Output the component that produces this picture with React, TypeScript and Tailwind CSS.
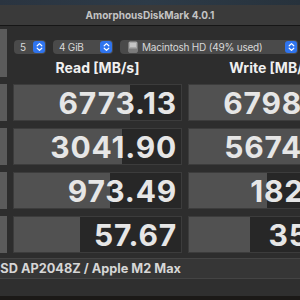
const rows = [
  { read: "6773.13", readVal: 6773.13, write: "6798.36", writeVal: 6798.36 },
  { read: "3041.90", readVal: 3041.9, write: "5674.05", writeVal: 5674.05 },
  { read: "973.49", readVal: 973.49, write: "182.72", writeVal: 182.72 },
  { read: "57.67", readVal: 57.67, write: "35.61", writeVal: 35.61 },
];

// log scale bar, ~24px per decade
const barWidth = (v: number) => Math.max(0, 24 * Math.log10(v) + 24);

function Stepper() {
  return (
    <div className="flex h-[12px] w-[12px] shrink-0 items-center justify-center rounded-[3px] bg-[#2f74ee]">
      <svg width="7" height="10" viewBox="0 0 7 10" fill="none" stroke="white" strokeWidth={1.2} strokeLinecap="round" strokeLinejoin="round">
        <path d="M1.2 3.8 L3.5 1.6 L5.8 3.8" />
        <path d="M1.2 6.2 L3.5 8.4 L5.8 6.2" />
      </svg>
    </div>
  );
}

function Select({ width, children }: { width: string; children: React.ReactNode }) {
  return (
    <div className={`flex h-[14px] shrink-0 items-center justify-between rounded-[4px] bg-[#4a4a4a] pl-[6px] pr-[1px] text-[10px] leading-none tracking-[-0.2px] whitespace-nowrap text-[#d8d8d8] ${width}`}>
      <div className="flex items-center gap-[4px]">{children}</div>
      <Stepper />
    </div>
  );
}

function Cell({ text, value, width }: { text: string; value: number; width: string }) {
  return (
    <div className={`relative h-[37px] shrink-0 border border-[#3c3c3c] bg-[#272727] ${width}`}>
      <div className="absolute left-0 top-0 h-full bg-[#515151]" style={{ width: barWidth(value) }} />
      <div className="relative flex h-full items-center justify-end pr-[4px] text-[30px] font-bold leading-none tracking-[0.8px] text-[#e6e6e6]">
        {text}
      </div>
    </div>
  );
}

export default function App() {
  return (
    <div className="flex h-[300px] w-[300px] flex-col overflow-hidden bg-[#1b1917] font-['Inter',sans-serif]">
      {/* desktop strip */}
      <div className="h-[5px] shrink-0 bg-gradient-to-r from-[#2a3440] via-[#2d3b48] to-[#27323c]" />

      {/* title bar */}
      <div className="flex h-[21px] shrink-0 items-center justify-center border-b border-[#161616] bg-[#3a3a3a] text-[10px] font-bold text-[#c4c4c4]">
        AmorphousDiskMark 4.0.1
      </div>

      <div className="flex w-[400px] shrink-0 flex-col bg-[#2d2d2d] pb-[5px]">
        {/* toolbar + headers */}
        <div className="flex pt-[3px]">
          <div className="h-[48px] w-[7px] shrink-0 bg-[#5b5b5b]" />
          <div className="ml-[6px] flex flex-col">
            <div className="mt-[11px] flex gap-[7px] pl-[1px]">
              <Select width="w-[32px]">5</Select>
              <Select width="w-[60px]">4 GiB</Select>
              <Select width="w-[178px]">
                <svg width="10" height="12" viewBox="0 0 10 12" className="ml-[2px]">
                  <rect x="0.5" y="0.5" width="9" height="11" rx="1.5" fill="#a8a8a8" />
                  <rect x="0.5" y="7.5" width="9" height="4" rx="1" fill="#7c7c7c" />
                  <rect x="2" y="2" width="6" height="4" fill="#c4c4c4" />
                </svg>
                <span>Macintosh HD (49% used)</span>
              </Select>
            </div>
            <div className="flex pt-[7px] text-[14px] font-bold leading-none text-[#f0f0f0]">
              <div className="w-[169px] text-center">Read [MB/s]</div>
              <div className="ml-[6px] w-[169px] text-center">Write [MB/s]</div>
            </div>
          </div>
        </div>

        {/* result rows */}
        <div className="mt-[7px] flex flex-col gap-[7px]">
          {rows.map((r) => (
            <div key={r.read} className="flex">
              <div className="h-[37px] w-[7px] shrink-0 bg-[#5b5b5b]" />
              <div className="ml-[6px] flex gap-[6px]">
                <Cell text={r.read} value={r.readVal} width="w-[169px]" />
                <Cell text={r.write} value={r.writeVal} width="w-[169px]" />
              </div>
            </div>
          ))}
        </div>
      </div>

      {/* device info */}
      <div className="flex h-[21px] shrink-0 items-center border-y border-[#444444] bg-[#363636] text-[12.75px] font-bold text-[#d6d6d6]">
        <span className="-ml-[8px] whitespace-nowrap">SSD AP2048Z / Apple M2 Max</span>
      </div>
      <div className="h-[17px] shrink-0 bg-[#2f2f2f]" />
    </div>
  );
}
